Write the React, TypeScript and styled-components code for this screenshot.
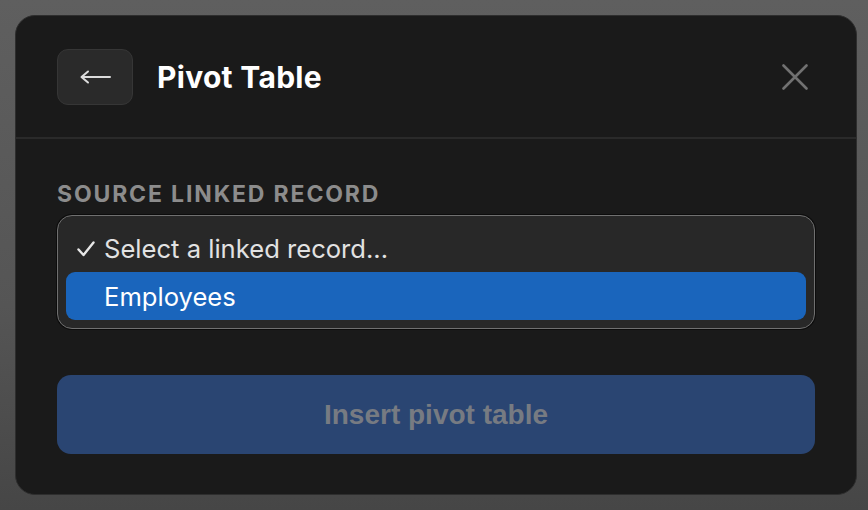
import React from "react";
import styled, { createGlobalStyle } from "styled-components";

const Global = createGlobalStyle`
  html, body {
    margin: 0;
    padding: 0;
    height: 100%;
  }
  body {
    background: linear-gradient(180deg, #5f5f5f 0%, #555 60%, #464646 100%);
    font-family: Inter, "Liberation Sans", sans-serif;
    -webkit-font-smoothing: antialiased;
  }
`;

const Stage = styled.div`
  width: 868px;
  height: 510px;
  padding: 15px 11px 15px 15px;
  box-sizing: border-box;
`;

const Dialog = styled.section`
  width: 842px;
  height: 480px;
  box-sizing: border-box;
  background: #1a1a1a;
  border: 1px solid #2e2e2e;
  border-radius: 20px;
  display: flex;
  flex-direction: column;
  overflow: hidden;
`;

const Header = styled.header`
  display: flex;
  align-items: center;
  gap: 24px;
  padding: 33px 48px 32px 41px;
  border-bottom: 2px solid #2a2a2a;
`;

const BackButton = styled.button`
  width: 76px;
  height: 56px;
  border-radius: 11px;
  background: #2a2a2a;
  border: 1px solid #363636;
  display: flex;
  align-items: center;
  justify-content: center;
  padding: 0;
  cursor: pointer;
`;

const Title = styled.h1`
  flex: 1;
  margin: 0;
  font-size: 30px;
  font-weight: 700;
  color: #ffffff;
  letter-spacing: 0.3px;
`;

const CloseButton = styled.button`
  background: none;
  border: 0;
  padding: 0;
  width: 26px;
  height: 26px;
  cursor: pointer;
  display: flex;
`;

const Body = styled.div`
  padding: 41px 41px 41px;
  display: flex;
  flex-direction: column;
`;

const Label = styled.div`
  font-size: 23px;
  line-height: 28px;
  font-weight: 700;
  color: #8c8c8c;
  letter-spacing: 1.85px;
  text-transform: uppercase;
  margin-bottom: 7px;
`;

const Menu = styled.div`
  height: 114px;
  box-sizing: border-box;
  background: #282828;
  border: 1.5px solid #707070;
  box-shadow: 0 0 0 1px #0c0c0c;
  border-radius: 15px;
  padding: 9px 8px 8px;
  display: flex;
  flex-direction: column;
  font-family: Inter, "Liberation Sans", sans-serif;
`;

const Option = styled.div<{ $active?: boolean }>`
  height: ${({ $active }) => ($active ? "48px" : "47px")};
  display: flex;
  align-items: center;
  gap: 8px;
  padding-left: 10px;
  border-radius: 9px;
  font-size: 25.6px;
  color: ${({ $active }) => ($active ? "#ffffff" : "#e2e2e2")};
  background: ${({ $active }) => ($active ? "#1a65bc" : "transparent")};
`;

const Check = styled.span`
  width: 20px;
  display: inline-flex;
  justify-content: center;
`;

const Submit = styled.button`
  margin-top: 46px;
  height: 79px;
  border: 0;
  border-radius: 14px;
  background: #2a4572;
  color: #777b82;
  font-family: "Liberation Sans", Arial, sans-serif;
  font-size: 28px;
  font-weight: 700;
  cursor: not-allowed;
`;

export default function App() {
  return (
    <>
      <Global />
      <Stage>
        <Dialog>
          <Header>
            <BackButton aria-label="Back">
              <svg width="32" height="14" viewBox="0 0 32 14">
                <path
                  d="M31 7H3M9 1.5L2.5 7L9 12.5"
                  fill="none"
                  stroke="#dcdcdc"
                  strokeWidth="2"
                  strokeLinecap="round"
                  strokeLinejoin="round"
                />
              </svg>
            </BackButton>
            <Title>Pivot Table</Title>
            <CloseButton aria-label="Close">
              <svg width="26" height="26" viewBox="0 0 26 26">
                <path
                  d="M1.5 1.5L24.5 24.5M24.5 1.5L1.5 24.5"
                  stroke="#717171"
                  strokeWidth="2.6"
                  strokeLinecap="round"
                />
              </svg>
            </CloseButton>
          </Header>
          <Body>
            <Label>Source linked record</Label>
            <Menu role="listbox">
              <Option>
                <Check>
                  <svg width="18" height="16" viewBox="0 0 18 16">
                    <path
                      d="M1.5 8.5L6.5 14L16.5 1.5"
                      fill="none"
                      stroke="#e6e6e6"
                      strokeWidth="2.4"
                      strokeLinecap="round"
                      strokeLinejoin="round"
                    />
                  </svg>
                </Check>
                Select a linked record...
              </Option>
              <Option $active>
                <Check />
                Employees
              </Option>
            </Menu>
            <Submit disabled>Insert pivot table</Submit>
          </Body>
        </Dialog>
      </Stage>
    </>
  );
}
